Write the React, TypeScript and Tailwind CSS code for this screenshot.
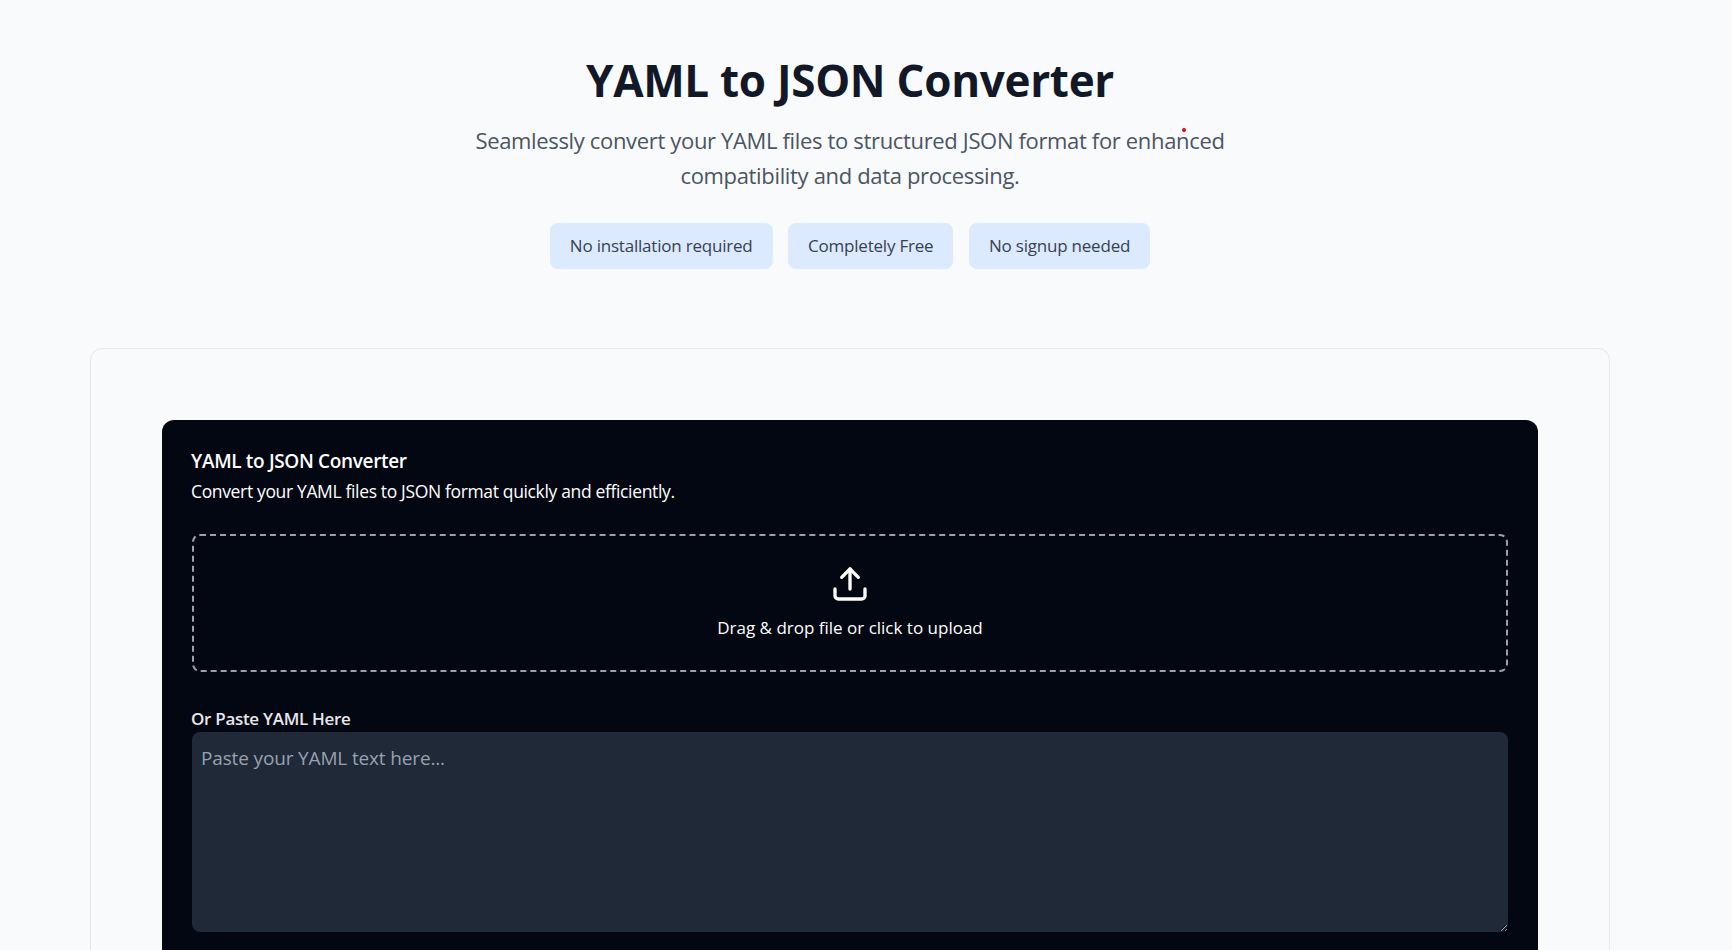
import { Upload } from 'lucide-react';

export default function App() {
    const badges = ['No installation required', 'Completely Free', 'No signup needed'];

    return (
        <div className="h-screen overflow-hidden bg-[#f9fafb] pr-[32px] font-['Open_Sans','Noto_Sans',sans-serif]">
            {/* Header */}
            <div className="relative flex flex-col items-center pt-[51px]">
                <h1 className="text-[44px] leading-[58px] font-bold text-[#111827] tracking-[-0.3px]">
                    YAML to JSON Converter
                </h1>
                <p className="mt-[14px] w-[768px] text-center text-[22px] leading-[35px] text-[#4b5563] tracking-[-0.34px]">
                    Seamlessly convert your YAML files to structured JSON format for enhanced compatibility and data processing.
                </p>
                <div className="mt-[30px] flex gap-[15.5px]">
                    {badges.map((badge) => (
                        <span key={badge} className="rounded-lg bg-[#dbeafe] px-5 py-[10px] text-[17px] leading-[26px] text-[#374151] tracking-[-0.21px]">
                            {badge}
                        </span>
                    ))}
                </div>
                <span className="absolute left-[1182px] top-[128px] h-[4px] w-[4px] rounded-full bg-red-600" />
            </div>

            {/* Converter card */}
            <div className="mx-[90px] mt-[79px] rounded-xl border border-gray-200 p-[71px]">
                <div className="h-[700px] rounded-xl bg-[#030712] px-[30px] pt-[27px]">
                    <h2 className="-ml-px text-[19px] leading-[28px] font-semibold text-white tracking-[-0.34px]">YAML to JSON Converter</h2>
                    <p className="-ml-px mt-[2px] text-[17.5px] leading-[28px] text-white tracking-[-0.35px]">
                        Convert your YAML files to JSON format quickly and efficiently.
                    </p>

                    <div className="mt-[29px] flex h-[138px] flex-col items-center justify-center rounded-lg border-2 border-dashed border-gray-400">
                        <Upload size={40} className="text-white" />
                        <p className="mt-[10px] text-[17px] leading-[28px] text-white">Drag &amp; drop file or click to upload</p>
                    </div>

                    <label className="-ml-px mt-[34px] block text-[17px] leading-[26px] font-semibold text-gray-200 tracking-[-0.3px]">
                        Or Paste YAML Here
                    </label>
                    <textarea
                        placeholder="Paste your YAML text here..."
                        className="block h-[200px] w-full rounded-lg bg-[#1f2937] px-[9px] py-[12px] text-[19px] leading-[28px] text-white placeholder-gray-400 outline-none tracking-[-0.15px]"
                    />
                </div>
            </div>
        </div>
    );
}
